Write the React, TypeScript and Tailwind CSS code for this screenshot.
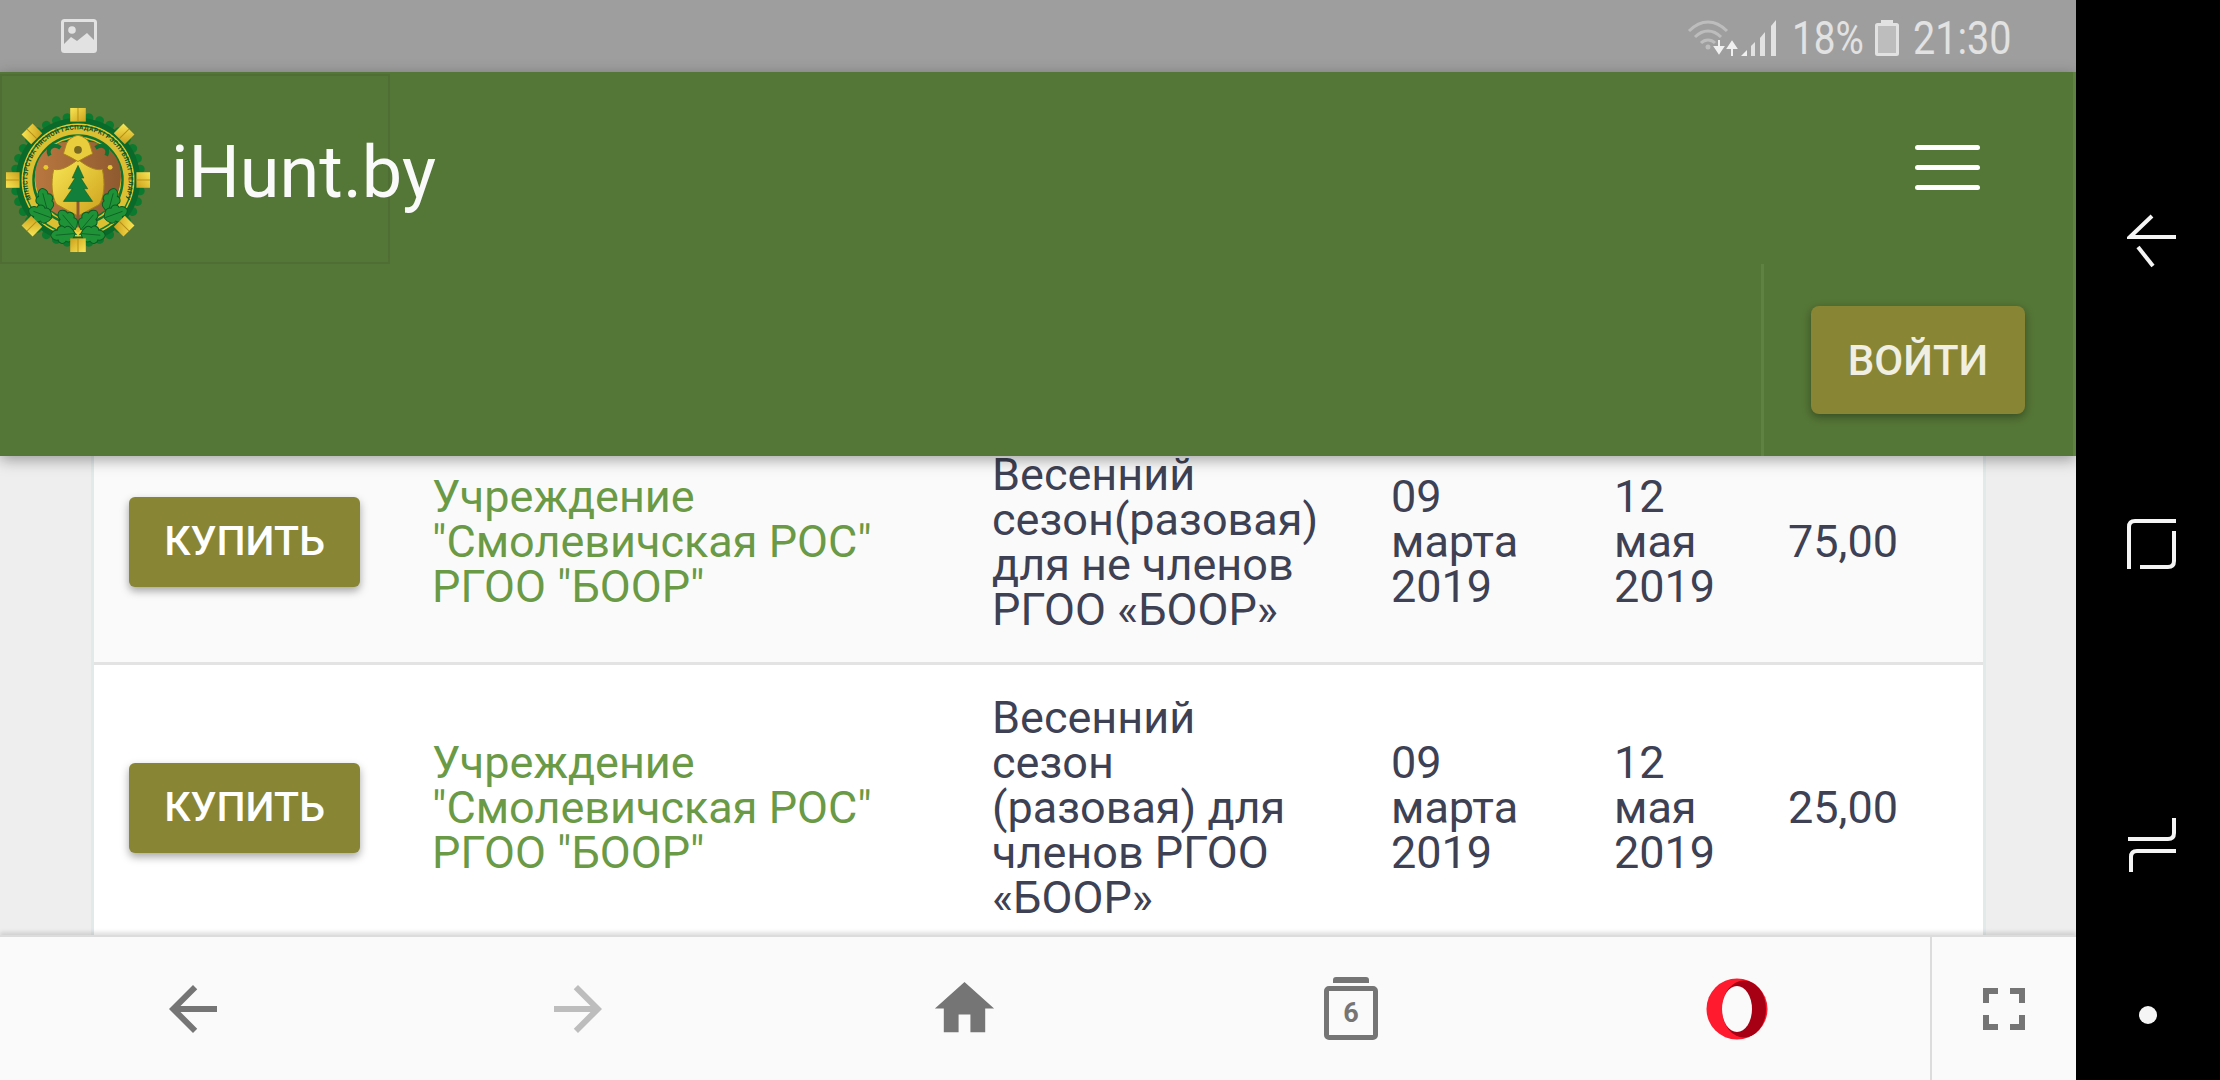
const rows = [
  {
    bg: "bg-[#fafafa]",
    height: "h-[244px]",
    season: ["Весенний", "сезон(разовая)", "для не членов", "РГОО «БООР»"],
    end: ["12", "мая", "2019"],
    price: "75,00",
  },
  {
    bg: "bg-white",
    height: "h-[288px]",
    season: ["Весенний", "сезон", "(разовая) для", "членов РГОО", "«БООР»"],
    end: ["12", "мая", "2019"],
    price: "25,00",
  },
];

const tabs = [0, 45, 90, 135, 180, 225, 270, 315];
const scallops = Array.from({ length: 36 }, (_, i) => (i * 360) / 36);

function Lines({ items }: { items: string[] }) {
  return (
    <>
      {items.map((line) => (
        <span key={line} className="block whitespace-nowrap">
          {line}
        </span>
      ))}
    </>
  );
}

function OakLeaf({ x, y, r }: { x: number; y: number; r: number }) {
  return (
    <g transform={`translate(${x} ${y}) rotate(${r})`}>
      <path
        d="M0 0C-6 -2 -10 -6 -7 -10C-11 -13 -8 -18 -5 -18C-6 -23 -1 -25 0 -25C1 -25 6 -23 5 -18C8 -18 11 -13 7 -10C10 -6 6 -2 0 0Z"
        fill="#1f9238"
        stroke="#0b5c22"
        strokeWidth="1"
      />
      <path d="M0 -1V-20" stroke="#0b5c22" strokeWidth="0.8" />
    </g>
  );
}

function Emblem() {
  return (
    <svg width="146" height="146" viewBox="0 0 150 150" className="ml-[2px] mt-[22px] shrink-0">
      <defs>
        <path id="ringText" d="M27 95A52 52 0 1 1 123 95" />
        <linearGradient id="goldFill" x1="0" y1="0" x2="1" y2="1">
          <stop offset="0" stopColor="#f8e654" />
          <stop offset="1" stopColor="#cda01c" />
        </linearGradient>
        <linearGradient id="brownFill" x1="0" y1="0" x2="1" y2="0">
          <stop offset="0" stopColor="#b9773f" />
          <stop offset="1" stopColor="#8f5a30" />
        </linearGradient>
      </defs>
      {scallops.map((a) => (
        <circle key={a} cx="75" cy="10" r="4.5" fill="#0b7a2e" transform={`rotate(${a} 75 75)`} />
      ))}
      <circle cx="75" cy="75" r="64" fill="#0a6a2a" />
      <circle cx="75" cy="75" r="58" fill="#e8c92e" />
      <circle cx="75" cy="75" r="56.5" fill="#0f7a32" />
      <circle cx="75" cy="75" r="55" fill="#dcc032" />
      <text fontFamily="Roboto, sans-serif" fontSize="6.5" fontWeight="700" fill="#124f24">
        <textPath href="#ringText" textLength="212">
          МІНІСТЭРСТВА ЛЯСНОЙ ГАСПАДАРКІ РЭСПУБЛІКІ БЕЛАРУСЬ
        </textPath>
      </text>
      <circle cx="75" cy="75" r="47" fill="#0c7430" />
      <circle cx="75" cy="75" r="44.5" fill="#e0bd2a" />
      <circle cx="75" cy="75" r="43" fill="#0c7430" />
      <path
        d="M33 58C38 44 52 36 62 36H88C98 36 112 44 117 58C122 72 118 92 106 104L75 124L44 104C32 92 28 72 33 58Z"
        fill="url(#brownFill)"
      />
      <path d="M46 50C42 42 50 37 57 42" fill="none" stroke="#0c7430" strokeWidth="4" />
      <path d="M104 50C108 42 100 37 93 42" fill="none" stroke="#0c7430" strokeWidth="4" />
      <circle cx="42" cy="62" r="2.5" fill="#e8c92e" />
      <circle cx="108" cy="62" r="2.5" fill="#e8c92e" />
      <path
        d="M50 64C58 66 67 60 75 54C83 60 92 66 100 64C103 78 102 92 97 100L75 112L53 100C48 92 47 78 50 64Z"
        fill="url(#goldFill)"
        stroke="#a9841a"
      />
      <path d="M63 38C65 33 70 30 75 29C80 30 85 33 87 38L90 48L82 52L75 56L68 52L60 48Z" fill="#e9cd3c" stroke="#a9841a" />
      <circle cx="75" cy="44" r="4" fill="#7a6a20" />
      <path d="M73.5 96H76.5V116H73.5Z" fill="#8f5a30" />
      <path
        d="M75 60L81 73H78L85 84H81L90 97H60L69 84H65L72 73H69Z"
        fill="#12803a"
        stroke="#0b5c22"
        strokeWidth="0.6"
      />
      <OakLeaf x={44} y={108} r={-15} />
      <OakLeaf x={48} y={114} r={-70} />
      <OakLeaf x={72} y={126} r={-40} />
      <OakLeaf x={72} y={130} r={-95} />
      <OakLeaf x={106} y={108} r={15} />
      <OakLeaf x={102} y={114} r={70} />
      <OakLeaf x={78} y={126} r={40} />
      <OakLeaf x={78} y={130} r={95} />
      <path d="M71 126L75 133L79 126L75 129Z" fill="#f0d63e" />
      {tabs.map((a) => (
        <g key={a} transform={`rotate(${a} 75 75)`}>
          <rect x="67" y="1" width="16" height="14" fill="url(#goldFill)" />
          <path d="M75 1V15" stroke="#b78f18" strokeWidth="1" />
        </g>
      ))}
    </svg>
  );
}

function StatusBar() {
  return (
    <div className="flex h-[72px] shrink-0 items-center bg-[#9e9e9e] pl-[61px] pr-[67px] text-[#e2e2e2]">
      <svg width="36" height="34" viewBox="0 0 36 34">
        <rect x="1.5" y="1.5" width="33" height="31" rx="2" fill="none" stroke="#e2e2e2" strokeWidth="3" />
        <circle cx="11" cy="11" r="3.8" fill="#e2e2e2" />
        <path d="M3 31V25L10 18L16 22L26 14L33 21V31Z" fill="#e2e2e2" />
      </svg>
      <div className="ml-auto mt-[3px] flex items-center font-['Roboto',sans-serif] text-[46px] leading-none">
        <svg width="56" height="40" viewBox="0 0 56 40">
          <path d="M3 13C15 1 29 1 41 13" fill="none" stroke="#bdbdbd" strokeWidth="3" />
          <path d="M9 19C17 11 27 11 35 19" fill="none" stroke="#bdbdbd" strokeWidth="3" />
          <path d="M15 25C19 21 25 21 29 25" fill="none" stroke="#bdbdbd" strokeWidth="3" />
          <circle cx="22" cy="29" r="2.5" fill="#bdbdbd" />
          <path d="M33 22V32M29 29L33 35L37 29Z" fill="#f0f0f0" stroke="#f0f0f0" strokeWidth="2" />
          <path d="M46 38V27M42 30L46 24L50 30Z" fill="#f0f0f0" stroke="#f0f0f0" strokeWidth="2" />
        </svg>
        <svg width="38" height="38" viewBox="0 0 38 38" className="ml-[-2px]">
          <path d="M1 37L7 31V37Z" fill="#f0f0f0" />
          <path d="M11 27L15 23V37H11Z" fill="#e2e2e2" />
          <path d="M20 19L25 13V37H20Z" fill="#e2e2e2" />
          <path d="M31 7L36 1V37H31Z" fill="#e2e2e2" />
        </svg>
        <span className="ml-[14px] inline-block w-[70px] origin-left scale-x-[0.84] whitespace-nowrap">18%</span>
        <svg width="24" height="36" viewBox="0 0 24 36" className="ml-[13px]">
          <rect x="6" y="0" width="12" height="4" fill="#e2e2e2" />
          <rect x="1.5" y="4.5" width="21" height="30" rx="1" fill="#bdbdbd" stroke="#e2e2e2" strokeWidth="3" />
        </svg>
        <span className="ml-[14px] inline-block w-[96px] origin-left scale-x-[0.86] whitespace-nowrap">21:30</span>
      </div>
    </div>
  );
}

function Header() {
  return (
    <header className="relative z-10 flex h-[384px] shrink-0 flex-col border-r-[3px] border-[#5f8142] bg-[#547636] font-['Roboto',sans-serif] shadow-[0_4px_14px_rgba(0,0,0,0.35)]">
      <div className="flex h-[192px] shrink-0 items-start">
        <div className="mt-[2px] flex h-[190px] w-[390px] shrink-0 items-center border-2 border-[#4e6e33] pl-[1px]">
          <Emblem />
          <span className="ml-[20px] mt-[8px] whitespace-nowrap text-[72px] leading-none text-[#fafafa]">iHunt.by</span>
        </div>
        <button className="ml-auto mr-[93px] mt-[73px] flex w-[65px] flex-col gap-[15px]" aria-label="Меню">
          <span className="h-[5px] rounded-full bg-white" />
          <span className="h-[5px] rounded-full bg-white" />
          <span className="h-[5px] rounded-full bg-white" />
        </button>
      </div>
      <div className="flex flex-1 justify-end">
        <div className="flex w-[312px] items-start border-l-[3px] border-[#5f8142] pl-[47px] pt-[42px]">
          <button className="flex h-[108px] w-[214px] items-center justify-center rounded-lg bg-[#888535] text-[42px] font-medium text-[#f0efe2] shadow-[0_3px_8px_rgba(0,0,0,0.35)]">
            ВОЙТИ
          </button>
        </div>
      </div>
    </header>
  );
}

function Table() {
  return (
    <main className="min-h-0 flex-1 overflow-hidden bg-[#eeeeee] pl-[91px] pr-[90px] font-['Roboto',sans-serif] text-[45px] leading-[45px] text-[#3d4153]">
      <div className="mt-[-35px] border-x-[3px] border-[#e2e9e9]">
        {rows.map((row) => (
          <div key={row.price} className={`flex items-center border-b-[3px] border-[#e3e3e3] ${row.bg} ${row.height}`}>
            <div className="w-[338px] shrink-0 pl-[35px]">
              <button className="flex h-[90px] w-[231px] items-center justify-center rounded-md bg-[#888535] text-[41px] font-medium text-white shadow-[0_4px_8px_rgba(0,0,0,0.35)]">
                КУПИТЬ
              </button>
            </div>
            <div className="w-[560px] shrink-0 text-[#6a9a45]">
              <Lines items={["Учреждение", "\"Смолевичская РОС\"", "РГОО \"БООР\""]} />
            </div>
            <div className="w-[399px] shrink-0">
              <Lines items={row.season} />
            </div>
            <div className="w-[223px] shrink-0">
              <Lines items={["09", "марта", "2019"]} />
            </div>
            <div className="w-[174px] shrink-0">
              <Lines items={row.end} />
            </div>
            <div>{row.price}</div>
          </div>
        ))}
      </div>
    </main>
  );
}

function BottomBar() {
  return (
    <div className="z-10 flex h-[145px] shrink-0 items-center border-t-[2px] border-[#dcdcdc] bg-[#fafafa] shadow-[0_-3px_4px_rgba(0,0,0,0.12)]">
      <div className="grid w-[1930px] shrink-0 grid-cols-5 place-items-center">
        <svg width="72" height="72" viewBox="0 0 24 24" fill="#757575">
          <path d="M20 11H7.83l5.59-5.59L12 4l-8 8 8 8 1.41-1.41L7.83 13H20v-2z" />
        </svg>
        <svg width="72" height="72" viewBox="0 0 24 24" fill="#bdbdbd" className="ml-[-2px]">
          <path d="M4 11h12.17l-5.59-5.59L12 4l8 8-8 8-1.41-1.41L16.17 13H4v-2z" />
        </svg>
        <svg width="71" height="71" viewBox="0 0 24 24" fill="#757575" className="ml-[-2px]">
          <path d="M10 20v-6h4v6h5v-8h3L12 3 2 12h3v8z" />
        </svg>
        <div className="flex flex-col items-center">
          <div className="mb-[3px] h-[6px] w-[36px] rounded-t-[3px] bg-[#757575]" />
          <div className="flex h-[54px] w-[54px] items-center justify-center rounded-[5px] border-[5px] border-[#757575] font-['Roboto',sans-serif] text-[27px] font-bold text-[#757575]">
            6
          </div>
        </div>
        <svg width="62" height="62" viewBox="0 0 62 62">
          <circle cx="31" cy="31" r="30.5" fill="#ff1b2d" />
          <ellipse cx="38" cy="31" rx="22" ry="28.5" fill="#a70014" />
          <ellipse cx="31" cy="31" rx="15" ry="23" fill="#fafafa" />
        </svg>
      </div>
      <div className="flex h-full flex-1 items-center justify-center border-l-[2px] border-[#dcdcdc]">
        <svg width="42" height="42" viewBox="0 0 42 42" fill="none" stroke="#757575" strokeWidth="6">
          <path d="M3 15V3H15M27 3H39V15M39 27V39H27M15 39H3V27" />
        </svg>
      </div>
    </div>
  );
}

function NavBar() {
  return (
    <aside className="flex w-[144px] shrink-0 flex-col items-center bg-black pl-[8px]">
      <svg width="50" height="54" viewBox="0 0 50 54" fill="none" stroke="#f5f5f5" strokeWidth="4" className="mt-[214px]">
        <path d="M25 2L3 23H49" />
        <path d="M11 33L26 52" />
      </svg>
      <svg width="50" height="52" viewBox="0 0 50 52" fill="none" stroke="#f5f5f5" strokeWidth="4" className="mt-[250px]">
        <path d="M2 51V9C2 5 4 3 8 3H49" />
        <path d="M13 49H41C45 49 47 47 47 43V13" />
      </svg>
      <svg width="50" height="56" viewBox="0 0 50 56" fill="none" stroke="#f5f5f5" strokeWidth="4" className="mt-[247px]">
        <path d="M1 22H41C45 22 47 20 47 16V1" />
        <path d="M49 34H10C6 34 4 36 4 40V55" />
      </svg>
      <div className="ml-[-8px] mt-[133px] h-[18px] w-[18px] rounded-full bg-[#f5f5f5]" />
    </aside>
  );
}

export default function App() {
  return (
    <div className="flex h-[1080px] w-[2220px] overflow-hidden">
      <div className="flex w-[2076px] shrink-0 flex-col">
        <StatusBar />
        <Header />
        <Table />
        <BottomBar />
      </div>
      <NavBar />
    </div>
  );
}
